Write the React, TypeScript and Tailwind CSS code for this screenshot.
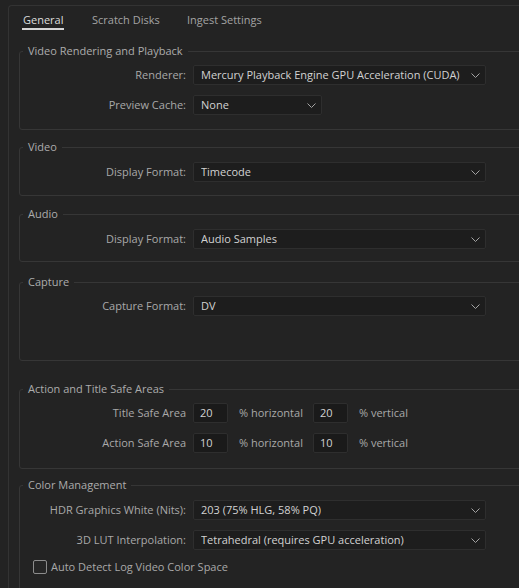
import React from 'react'

const Chevron = () => (
  <svg width="9" height="5" viewBox="0 0 9 5" fill="none" className="shrink-0">
    <path d="M0.5 0.5 L4.5 4.5 L8.5 0.5" stroke="#a3a3a3" strokeWidth="1" />
  </svg>
)

const Select = ({ value, width }: { value: string; width: string }) => (
  <div
    className={`${width} ml-[7px] h-[20px] flex items-center justify-between pl-[7px] pr-[5px] bg-[#1d1d1d] border border-[#2e2e2e] rounded-[2px] text-[#d2d2d2]`}
  >
    <span className="truncate">{value}</span>
    <Chevron />
  </div>
)

const Label = ({ children }: { children: React.ReactNode }) => (
  <span className="w-[166px] shrink-0 text-right text-[#a9a9a9] whitespace-nowrap">{children}</span>
)

const Row = ({ label, value, width = 'w-[293px]' }: { label: string; value: string; width?: string }) => (
  <div className="flex items-center h-[20px]">
    <Label>{label}</Label>
    <Select value={value} width={width} />
  </div>
)

const Group = ({
  title,
  className,
  children,
}: {
  title: string
  className: string
  children: React.ReactNode
}) => (
  <fieldset className={`border border-[#363636] rounded-[3px] px-0 ${className}`}>
    <legend className="ml-[3px] px-[5px] leading-[14px] text-[#acacac]">{title}</legend>
    {children}
  </fieldset>
)

const NumBox = ({ value }: { value: string }) => (
  <div className="w-[35px] h-[20px] shrink-0 flex items-center pl-[6px] bg-[#1a1a1a] border border-[#2e2e2e] rounded-[2px] text-[#d2d2d2]">
    {value}
  </div>
)

const SafeRow = ({ label, h, v }: { label: string; h: string; v: string }) => (
  <div className="flex items-center h-[20px]">
    <Label>{label}</Label>
    <div className="ml-[7px] flex items-center">
      <NumBox value={h} />
      <span className="w-[85px] pl-[11px] text-[#a9a9a9]">% horizontal</span>
      <NumBox value={v} />
      <span className="pl-[11px] text-[#a9a9a9]">% vertical</span>
    </div>
  </div>
)

export default function App() {
  return (
    <div className="w-[519px] h-[588px] overflow-hidden bg-[#232323] text-[11px] font-['Open_Sans',sans-serif]">
      <div className="ml-[8px] mt-[5px] w-[560px] h-[620px] border-t border-l border-[#333333] rounded-tl-[4px]">
        <div className="flex pl-[14px] pt-[7px] leading-[14px]">
          <div className="w-[69px] flex flex-col items-start">
            <span className="text-[#dcdcdc]">General</span>
            <span className="mt-[1px] -ml-[1px] h-[2px] w-[42px] bg-[#d6d6d6]" />
          </div>
          <span className="w-[95px] text-[#a3a3a3]">Scratch Disks</span>
          <span className="text-[#a3a3a3]">Ingest Settings</span>
        </div>

        <div className="ml-[10px] mt-[14px] w-[530px]">
          <Group title="Video Rendering and Playback" className="pt-[7px] pb-[14px]">
            <div className="flex flex-col gap-[10px]">
              <Row label="Renderer:" value="Mercury Playback Engine GPU Acceleration (CUDA)" />
              <Row label="Preview Cache:" value="None" width="w-[129px]" />
            </div>
          </Group>

          <Group title="Video" className="mt-[10px] pt-[8px] pb-[13px]">
            <Row label="Display Format:" value="Timecode" />
          </Group>

          <Group title="Audio" className="mt-[11px] pt-[8px] pb-[12px]">
            <Row label="Display Format:" value="Audio Samples" />
          </Group>

          <Group title="Capture" className="mt-[13px] pt-[7px] pb-[44px]">
            <Row label="Capture Format:" value="DV" />
          </Group>

          <Group title="Action and Title Safe Areas" className="mt-[21px] pt-[7px] pb-[15px]">
            <div className="flex flex-col gap-[10px]">
              <SafeRow label="Title Safe Area" h="20" v="20" />
              <SafeRow label="Action Safe Area" h="10" v="10" />
            </div>
          </Group>

          <Group title="Color Management" className="mt-[9px] pt-[8px] pb-[20px]">
            <div className="flex flex-col gap-[10px]">
              <Row label="HDR Graphics White (Nits):" value="203 (75% HLG, 58% PQ)" />
              <Row label="3D LUT Interpolation:" value="Tetrahedral (requires GPU acceleration)" />
              <label className="flex items-center h-[14px] ml-[13px] gap-[4px] text-[#a9a9a9]">
                <span className="w-[14px] h-[14px] border border-[#8c8c8c] rounded-[2px] bg-[#262626]" />
                Auto Detect Log Video Color Space
              </label>
            </div>
          </Group>
        </div>
      </div>
    </div>
  )
}
